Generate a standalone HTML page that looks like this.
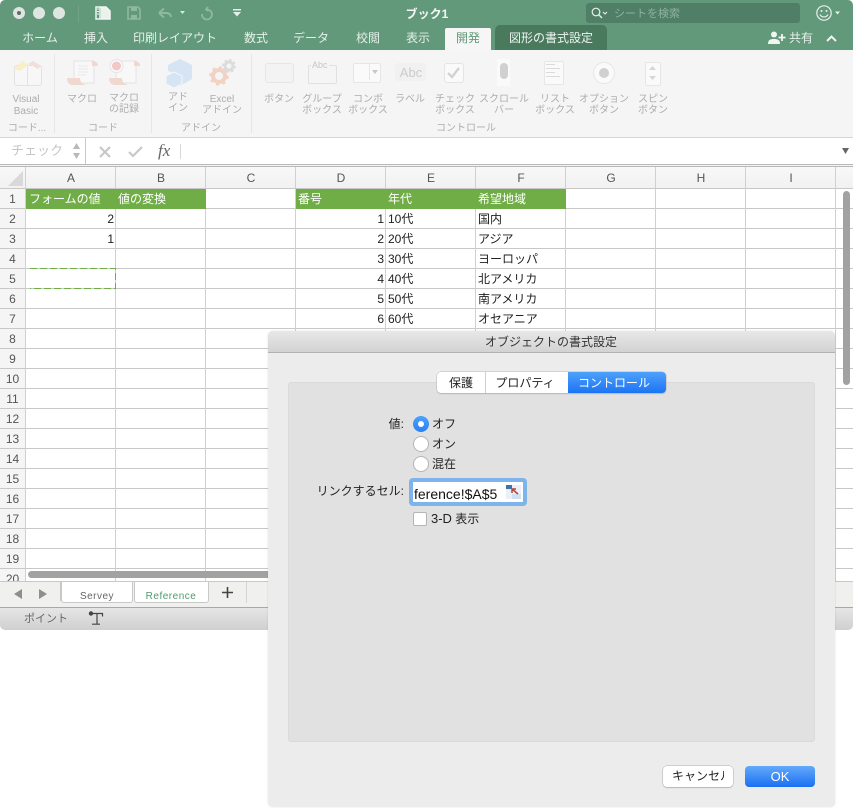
<!DOCTYPE html>
<html lang="ja"><head><meta charset="utf-8"><style>
html,body{margin:0;padding:0;background:#fff}
#p{position:relative;width:853px;height:808px;overflow:hidden;background:#fff;font-family:"Liberation Sans","Noto Sans CJK JP",sans-serif;font-size:12px;color:#222}
#p div{position:absolute}
#p svg{position:absolute;overflow:visible}
.t{white-space:nowrap;line-height:14px;height:14px}
.c{transform:translateX(-50%)}
.r{transform:translateX(-100%)}
.tab{color:#e6f0ea;font-size:12px;top:31px}
.rb{color:#adadad;font-size:10px;line-height:11px;height:auto;text-align:center}
.g{color:#adadad;font-size:10px;top:122px}
.sep{width:1px;top:54px;height:79px;background:#e6e6e6}
.rh{left:0;width:25px;text-align:center;color:#555;font-size:12px}
.ch{color:#555;font-size:12px;top:171px}
.w{color:#fff;font-size:12px;top:192px}
.k{color:#222;font-size:12px}
.n{color:#222;font-size:12px}
.rad{width:14px;height:14px;border-radius:50%;background:#fff;border:1px solid #b5b5b5;left:413px}
.d{color:#222;font-size:12px}
</style></head><body><div id="p">

<!-- title bar -->
<div style="left:0;top:0;width:853px;height:50px;background:#62997a;border-radius:5px 5px 0 0"></div>
<div style="left:13px;top:7px;width:12px;height:12px;border-radius:50%;background:#dfe5e1"></div>
<div style="left:17px;top:11px;width:4px;height:4px;border-radius:50%;background:#5d6e64"></div>
<div style="left:33px;top:7px;width:12px;height:12px;border-radius:50%;background:#dfe5e1"></div>
<div style="left:53px;top:7px;width:12px;height:12px;border-radius:50%;background:#dfe5e1"></div>
<div style="left:78px;top:5px;width:1px;height:17px;background:#6fa486"></div>
<svg style="left:95px;top:6px" width="16" height="14" viewBox="0 0 16 14"><path d="M1 1h10l4 4v8H1z" fill="none" stroke="#f2f6f3" stroke-width="1.5"/><path d="M5 1v12" stroke="#f2f6f3" stroke-width="1.5"/><path d="M2 3h2M2 5.500h2M2 8h2" stroke="#f2f6f3"/><path d="M6 1h5l4 4v8H6z" fill="#f2f6f3" opacity=".95"/></svg>
<svg style="left:127px;top:6px" width="14" height="14" viewBox="0 0 14 14"><path d="M1 1h10l2 2v10H1z" fill="none" stroke="#8fb8a0" stroke-width="1.6"/><path d="M4 1h6v4H4zM4 9h6v4H4z" fill="#8fb8a0"/></svg>
<svg style="left:157px;top:7px" width="28" height="12" viewBox="0 0 28 12"><path d="M2 6 7 1.500M2 6l5 4.500M2 6h7a4.500 4.500 0 0 1 5 4" fill="none" stroke="#8fb8a0" stroke-width="2"/><path d="M23 4h5l-2.500 3z" fill="#dbe8e0"/></svg>
<svg style="left:200px;top:6px" width="13" height="14" viewBox="0 0 13 14"><path d="M8 1 6 3.500 8.500 5M6.500 3.500A5 5 0 1 1 2 8" fill="none" stroke="#8fb8a0" stroke-width="1.800"/></svg>
<svg style="left:232px;top:9px" width="11" height="8" viewBox="0 0 11 8"><path d="M1 0h8v1.500H1z" fill="#e6f0ea"/><path d="M1 3h8L5 7.500z" fill="#e6f0ea"/></svg>
<div class="t c" style="left:427px;top:7px;color:#f4f8f5;font-weight:bold;font-size:12px">ブック1</div>
<div style="left:586px;top:3px;width:214px;height:20px;background:#4f7f66;border-radius:3px"></div>
<svg style="left:591px;top:7px" width="18" height="12" viewBox="0 0 18 12"><circle cx="5" cy="5" r="3.800" fill="none" stroke="#e8f0eb" stroke-width="1.200"/><path d="M8 8l3 3" stroke="#e8f0eb" stroke-width="1.300"/><path d="M12 5l2 2 2-2" fill="none" stroke="#e8f0eb" stroke-width="1.100"/></svg>
<div class="t" style="left:614px;top:7px;color:#8fb39f;font-size:11px">シートを検索</div>
<svg style="left:816px;top:5px" width="26" height="16" viewBox="0 0 26 16"><circle cx="8" cy="8" r="7.200" fill="none" stroke="#e8f0eb" stroke-width="1.200"/><circle cx="5.500" cy="6" r="1" fill="#e8f0eb"/><circle cx="10.500" cy="6" r="1" fill="#e8f0eb"/><path d="M4 9.500a4.500 4.500 0 0 0 8 0" fill="none" stroke="#e8f0eb" stroke-width="1.200"/><path d="M19 6.500h5l-2.500 3z" fill="#e8f0eb"/></svg>

<!-- tabs -->
<div class="t c tab" style="left:40px">ホーム</div>
<div class="t c tab" style="left:96px">挿入</div>
<div class="t c tab" style="left:175px">印刷レイアウト</div>
<div class="t c tab" style="left:256px">数式</div>
<div class="t c tab" style="left:311px">データ</div>
<div class="t c tab" style="left:368px">校閲</div>
<div class="t c tab" style="left:418px">表示</div>
<div style="left:445px;top:28px;width:46px;height:22px;background:#f6f6f6;border-radius:2px 2px 0 0"></div>
<div class="t c tab" style="left:468px;color:#62997a">開発</div>
<div style="left:495px;top:25px;width:112px;height:25px;background:#4a7a5e;border-radius:5px 5px 0 0"></div>
<div class="t c tab" style="left:551px;color:#eef4f0">図形の書式設定</div>
<svg style="left:768px;top:31px" width="18" height="13" viewBox="0 0 18 13"><circle cx="6" cy="3.500" r="3" fill="#f0f5f2"/><path d="M0 13c0-4 2-5 6-5s6 1 6 5z" fill="#f0f5f2"/><path d="M14 3v7M10.500 6.500h7" stroke="#f0f5f2" stroke-width="1.800"/></svg>
<div class="t c tab" style="left:801px">共有</div>
<svg style="left:826px;top:35px" width="11" height="7" viewBox="0 0 11 7"><path d="M1 6l4.500-4.500L10 6" fill="none" stroke="#f0f5f2" stroke-width="2"/></svg>

<!-- ribbon -->
<div style="left:0;top:50px;width:853px;height:87px;background:#f5f5f5"></div>
<div class="sep" style="left:54px"></div><div class="sep" style="left:151px"></div><div class="sep" style="left:251px"></div>

<svg style="left:12px;top:59px" width="32" height="28" viewBox="0 0 32 28"><rect x="2.500" y="6.500" width="27" height="20" rx="2" fill="#f7f7f7" stroke="#e2e2e2"/><path d="M15.500 7v19" stroke="#e2e2e2"/><path d="M1 10 11 2l5 4-8 6z" fill="#f8eec8"/><path d="M16 5l5-3 8 5-3 3-5-3z" fill="#f2dedb"/></svg>
<div class="t rb c" style="left:26px;top:94px;line-height:12px">Visual<br>Basic</div>
<div class="t g c" style="left:27px">コード...</div>

<svg style="left:66px;top:59px" width="33" height="28" viewBox="0 0 33 28"><path d="M8 2h20v22H12c-3 0-4-2-4-5z" fill="#f8f8f8" stroke="#e4e4e4"/><path d="M26 2c4 0 6 2 6 5h-6z" fill="#f0d8ce"/><path d="M1 19h13c0 4 2 6 6 7H7c-4 0-6-3-6-7z" fill="#f0d8ce"/><path d="M12 7h10M12 10h10M12 13h10M12 16h8" stroke="#e8e8e8"/></svg>
<div class="t rb c" style="left:82px;top:94px">マクロ</div>
<svg style="left:108px;top:59px" width="33" height="28" viewBox="0 0 33 28"><path d="M8 2h20v22H12c-3 0-4-2-4-5z" fill="#f8f8f8" stroke="#e4e4e4"/><path d="M26 2c4 0 6 2 6 5h-6z" fill="#f0d8ce"/><path d="M1 19h13c0 4 2 6 6 7H7c-4 0-6-3-6-7z" fill="#f0d8ce"/><circle cx="8.500" cy="7" r="6.500" fill="#fafafa" stroke="#e4e4e4"/><circle cx="8.500" cy="7" r="4.500" fill="#f3c6c8"/></svg>
<div class="t rb c" style="left:124px;top:93px">マクロ<br>の記録</div>
<div class="t g c" style="left:103px">コード</div>

<svg style="left:165px;top:58px" width="28" height="30" viewBox="0 0 28 30"><path d="M15 1l12 6v14l-12 7-6-3V15l-6-2 0-6z" fill="#d6e5f4"/><path d="M9 14l8 4v8l-8 4-8-4v-8z" fill="#d6e5f4" stroke="#f5f5f5"/></svg>
<div class="t rb c" style="left:178px;top:93px;line-height:10.500px">アド<br>イン</div>
<svg style="left:208px;top:59px" width="28" height="28" viewBox="0 0 28 28"><circle cx="11" cy="17" r="6" fill="none" stroke="#f1d2c3" stroke-width="4"/><circle cx="11" cy="17" r="8.500" fill="none" stroke="#f1d2c3" stroke-width="2.500" stroke-dasharray="3 3.600"/><circle cx="21" cy="7" r="4" fill="none" stroke="#dcdcdc" stroke-width="3"/><circle cx="21" cy="7" r="6" fill="none" stroke="#dcdcdc" stroke-width="2" stroke-dasharray="2.400 2.300"/></svg>
<div class="t rb c" style="left:222px;top:94px">Excel<br>アドイン</div>
<div class="t g c" style="left:201px">アドイン</div>

<div style="left:265px;top:63px;width:27px;height:18px;background:#f3f3f3;border:1px solid #e6e6e6;border-radius:3px"></div>
<div class="t rb c" style="left:279px;top:94px">ボタン</div>
<div style="left:308px;top:65px;width:27px;height:17px;border:1px solid #e0e0e0;border-radius:2px"></div>
<div class="t" style="left:311px;top:58px;padding:0 1px;background:#f5f5f5;color:#c6c6c6;font-size:9px">Abc</div>
<div class="t rb c" style="left:322px;top:94px">グループ<br>ボックス</div>
<div style="left:353px;top:63px;width:26px;height:18px;background:#fafafa;border:1px solid #e6e6e6;border-radius:2px"></div>
<div style="left:369px;top:64px;width:1px;height:16px;background:#e6e6e6"></div>
<svg style="left:372px;top:70px" width="6" height="5"><path d="M0 0h6L3 4z" fill="#c6c6c6"/></svg>
<div class="t rb c" style="left:368px;top:94px">コンボ<br>ボックス</div>
<div style="left:395px;top:63px;width:31px;height:18px;background:#f1f1f1;border-radius:3px"></div>
<div class="t c" style="left:411px;top:66px;color:#cbcbcb;font-size:13px">Abc</div>
<div class="t rb c" style="left:410px;top:94px">ラベル</div>
<div style="left:444px;top:63px;width:18px;height:18px;background:#fafafa;border:1px solid #e4e4e4;border-radius:3px"></div>
<svg style="left:447px;top:67px" width="14" height="12" viewBox="0 0 14 12"><path d="M1 6l4 4 7-9" fill="none" stroke="#d2d2d2" stroke-width="2.400"/></svg>
<div class="t rb c" style="left:455px;top:94px">チェック<br>ボックス</div>
<div style="left:497px;top:59px;width:13px;height:27px;background:#fafafa"></div>
<div style="left:500px;top:63px;width:8px;height:16px;background:#d0d0d0;border-radius:4px"></div>
<div class="t rb c" style="left:504px;top:94px">スクロール<br>バー</div>
<div style="left:544px;top:61px;width:18px;height:22px;background:#fafafa;border:1px solid #e6e6e6;border-radius:2px"></div>
<svg style="left:546px;top:64px" width="15" height="18"><path d="M0 .5h9M0 4.500h14M0 8.500h9M0 12.500h14" stroke="#dadada"/></svg>
<div class="t rb c" style="left:555px;top:94px">リスト<br>ボックス</div>
<div style="left:593px;top:62px;width:20px;height:20px;background:#fafafa;border:1px solid #e6e6e6;border-radius:50%"></div>
<div style="left:599px;top:68px;width:10px;height:10px;background:#d0d0d0;border-radius:50%"></div>
<div class="t rb c" style="left:604px;top:94px">オプション<br>ボタン</div>
<div style="left:645px;top:62px;width:14px;height:22px;background:#fafafa;border:1px solid #e6e6e6;border-radius:2px"></div>
<svg style="left:649px;top:66px" width="8" height="15"><path d="M0 4l3.500-4L7 4zM0 10h7l-3.500 4z" fill="#d6d6d6"/></svg>
<div class="t rb c" style="left:653px;top:94px">スピン<br>ボタン</div>
<div class="t g c" style="left:466px">コントロール</div>

<!-- formula bar -->
<div style="left:0;top:137px;width:853px;height:1px;background:#d6d6d6"></div>
<div style="left:0;top:138px;width:853px;height:26px;background:#fff"></div>
<div style="left:0;top:164px;width:853px;height:1px;background:#b8b8b8"></div>
<div style="left:0;top:165px;width:853px;height:1px;background:#f4f4f4"></div>
<div style="left:0;top:166px;width:853px;height:1px;background:#b8b8b8"></div>
<div style="left:85px;top:138px;width:1px;height:26px;background:#c8c8c8"></div>
<div class="t" style="left:11px;top:144px;color:#c6c6c6;font-size:13px">チェック</div>
<svg style="left:73px;top:143px" width="8" height="17"><path d="M0 6l3.500-6L7 6zM0 10h7l-3.500 6z" fill="#b8b8b8"/></svg>
<svg style="left:99px;top:146px" width="12" height="12"><path d="M1 1l10 10M11 1 1 11" stroke="#c8c8c8" stroke-width="2.200"/></svg>
<svg style="left:128px;top:146px" width="15" height="12"><path d="M1 6l4 4 9-9" fill="none" stroke="#c8c8c8" stroke-width="2.200"/></svg>
<div class="t" style="left:158px;top:143px;color:#666;font:italic 17px 'Liberation Serif',serif;line-height:16px">fx</div>
<div style="left:180px;top:144px;width:1px;height:15px;background:#d8d8d8"></div>
<svg style="left:842px;top:148px" width="8" height="6"><path d="M0 0h7L3.500 6z" fill="#666"/></svg>

<!-- grid -->
<div style="left:0;top:167px;width:853px;height:21px;background:linear-gradient(#f8f8f8,#f1f1f1)"></div>
<div style="left:0;top:188px;width:25px;height:393px;background:#f5f5f5"></div>
<div style="left:0;top:188px;width:853px;height:393px;background-image:repeating-linear-gradient(to bottom,#c8c8c8 0,#c8c8c8 1px,transparent 1px,transparent 20px)"></div>
<div style="left:25px;top:167px;width:828px;height:414px;background-image:repeating-linear-gradient(to right,#d0d0d0 0,#d0d0d0 1px,transparent 1px,transparent 90px);background-size:811px 100%;background-repeat:no-repeat"></div>
<svg style="left:8px;top:171px" width="16" height="16"><path d="M15 0v15H0z" fill="#d9d9d9"/></svg>

<div class="t ch c" style="left:71px">A</div><div class="t ch c" style="left:161px">B</div><div class="t ch c" style="left:251px">C</div><div class="t ch c" style="left:341px">D</div><div class="t ch c" style="left:431px">E</div><div class="t ch c" style="left:521px">F</div><div class="t ch c" style="left:611px">G</div><div class="t ch c" style="left:701px">H</div><div class="t ch c" style="left:791px">I</div>
<div class="t rh" style="top:192px">1</div><div class="t rh" style="top:212px">2</div><div class="t rh" style="top:232px">3</div><div class="t rh" style="top:252px">4</div><div class="t rh" style="top:272px">5</div><div class="t rh" style="top:292px">6</div><div class="t rh" style="top:312px">7</div><div class="t rh" style="top:332px">8</div><div class="t rh" style="top:352px">9</div><div class="t rh" style="top:372px">10</div><div class="t rh" style="top:392px">11</div><div class="t rh" style="top:412px">12</div><div class="t rh" style="top:432px">13</div><div class="t rh" style="top:452px">14</div><div class="t rh" style="top:472px">15</div><div class="t rh" style="top:492px">16</div><div class="t rh" style="top:512px">17</div><div class="t rh" style="top:532px">18</div><div class="t rh" style="top:552px">19</div><div class="t rh" style="top:572px;height:9px;overflow:hidden">20</div>

<div style="left:26px;top:189px;width:180px;height:20px;background:#70ad47"></div>
<div style="left:296px;top:189px;width:270px;height:20px;background:#70ad47"></div>
<div class="t w" style="left:29px">フォームの値</div><div class="t w" style="left:118px">値の変換</div>
<div class="t w" style="left:298px">番号</div><div class="t w" style="left:388px">年代</div><div class="t w" style="left:478px">希望地域</div>
<div class="t n r" style="left:114px;top:212px">2</div><div class="t n r" style="left:114px;top:232px">1</div>
<div class="t n r" style="left:384px;top:212px">1</div><div class="t n r" style="left:384px;top:232px">2</div><div class="t n r" style="left:384px;top:252px">3</div><div class="t n r" style="left:384px;top:272px">4</div><div class="t n r" style="left:384px;top:292px">5</div><div class="t n r" style="left:384px;top:312px">6</div>
<div class="t k" style="left:388px;top:212px">10代</div><div class="t k" style="left:388px;top:232px">20代</div><div class="t k" style="left:388px;top:252px">30代</div><div class="t k" style="left:388px;top:272px">40代</div><div class="t k" style="left:388px;top:292px">50代</div><div class="t k" style="left:388px;top:312px">60代</div>
<div class="t k" style="left:478px;top:212px">国内</div><div class="t k" style="left:478px;top:232px">アジア</div><div class="t k" style="left:478px;top:252px">ヨーロッパ</div><div class="t k" style="left:478px;top:272px">北アメリカ</div><div class="t k" style="left:478px;top:292px">南アメリカ</div><div class="t k" style="left:478px;top:312px">オセアニア</div>

<svg style="left:26px;top:268px" width="91" height="22"><path d="M4 .5H89.500V20.500H4" fill="none" stroke="#70ad47" stroke-dasharray="7 3"/></svg>

<!-- scrollbars -->
<div style="left:843px;top:191px;width:7px;height:194px;background:#a2a2a2;border-radius:4px"></div>
<div style="left:28px;top:571px;width:245px;height:7px;background:#a2a2a2;border-radius:4px"></div>

<!-- sheet tabs / status -->
<div style="left:0;top:581px;width:853px;height:1px;background:#c8c8c8"></div>
<div style="left:0;top:582px;width:853px;height:25px;background:#f0f0ee"></div>
<svg style="left:14px;top:589px" width="33" height="11"><path d="M8 0v10L0 5zM25 0v10l8-5z" fill="#8e8e8e"/></svg>
<div style="left:61px;top:582px;width:72px;height:21px;background:#fff;border:1px solid #c8c8c8;border-top:0;border-radius:0 0 3px 3px;box-sizing:border-box"></div>
<div style="left:134px;top:582px;width:75px;height:21px;background:#fff;border:1px solid #c8c8c8;border-top:0;border-radius:0 0 3px 3px;box-sizing:border-box"></div>
<div style="left:60px;top:581px;width:1px;height:20px;background:#c8c8c8"></div>
<div class="t c" style="left:97px;top:590px;color:#666;font-size:10px;letter-spacing:.5px">Servey</div>
<div class="t c" style="left:171px;top:590px;color:#4e9a6d;font-size:10px;letter-spacing:.5px">Reference</div>
<svg style="left:222px;top:587px" width="11" height="11"><path d="M5.500 0v11M0 5.500h11" stroke="#444" stroke-width="1.600"/></svg>
<div style="left:246px;top:582px;width:1px;height:21px;background:#d4d4d4"></div>
<div style="left:0;top:607px;width:853px;height:1px;background:#a8a8a8"></div>
<div style="left:0;top:608px;width:853px;height:22px;background:linear-gradient(#e6e6e6,#d0d0d0);border-radius:0 0 5px 5px"></div>
<div class="t" style="left:24px;top:612px;color:#666;font-size:11px">ポイント</div>
<svg style="left:88px;top:611px" width="16" height="15" viewBox="0 0 16 15"><circle cx="3" cy="2.500" r="2.200" fill="#444"/><path d="M3 2.500h11.500v3M9 2.500v10.500M4 13.200h8" fill="none" stroke="#444" stroke-width="1.200"/></svg>

<!-- dialog -->
<div style="left:268px;top:331px;width:567px;height:476px;background:#ececec;border-radius:5px 5px 5px 5px;box-shadow:0 0 2px rgba(0,0,0,.12)"></div>
<div style="left:268px;top:331px;width:567px;height:21px;background:linear-gradient(#e9e7e9,#d3d3d3);border-bottom:1px solid #b2b2b2;border-radius:5px 5px 0 0"></div>
<div class="t c" style="left:551px;top:335px;color:#333;font-size:12px">オブジェクトの書式設定</div>
<div style="left:288px;top:382px;width:525px;height:358px;background:#e1e1e1;border:1px solid #dadada;border-radius:3px"></div>

<div style="left:437px;top:372px;width:229px;height:21px;background:#fff;border-radius:4px;box-shadow:0 0 0 .5px #b8b8b8,0 1px 1px rgba(0,0,0,.2)"></div>
<div style="left:485px;top:372px;width:1px;height:21px;background:#d0d0d0"></div>
<div style="left:568px;top:372px;width:98px;height:21px;background:linear-gradient(#4ea1fb,#1c74f3);border-radius:0 4px 4px 0"></div>
<div class="t c" style="left:461px;top:376px;color:#222;font-size:12px">保護</div>
<div class="t c" style="left:525px;top:376px;color:#222;font-size:12px">プロパティ</div>
<div class="t c" style="left:614px;top:376px;color:#fff;font-size:12px">コントロール</div>

<div class="t d r" style="left:404px;top:417px">値:</div>
<div class="rad" style="top:416px;width:16px;height:16px;left:413px;border:0;background:linear-gradient(#4ea1fb,#2a80f5)"></div>
<div style="left:418px;top:421px;width:6px;height:6px;background:#fff;border-radius:50%"></div>
<div class="rad" style="top:436px"></div>
<div class="rad" style="top:456px"></div>
<div class="t d" style="left:432px;top:417px">オフ</div>
<div class="t d" style="left:432px;top:437px">オン</div>
<div class="t d" style="left:432px;top:457px">混在</div>

<div class="t d r" style="left:404px;top:484px">リンクするセル:</div>
<div style="left:409px;top:478px;width:118px;height:28px;background:#7db4ec;border-radius:4px"></div>
<div style="left:413px;top:482px;width:110px;height:20px;background:#fff"></div>
<div class="t" style="left:414px;top:487px;color:#111;font-size:14px">ference!$A$5</div>
<svg style="left:506px;top:485px" width="15" height="14" viewBox="0 0 15 14"><rect width="15" height="14" fill="#eaf0f5"/><rect width="6" height="4" fill="#3f72a8"/><rect y="9" x="6" width="9" height="5" fill="#cfe0ee"/><path d="M6 4l6 5M6 4h4M6 4v4" stroke="#b5463c" stroke-width="1.500" fill="none"/></svg>
<div style="left:413px;top:512px;width:12px;height:12px;background:#fff;border:1px solid #b5b5b5;border-radius:2px"></div>
<div class="t d" style="left:431px;top:512px"><span style="font-size:13px">3-D</span> 表示</div>

<div style="left:663px;top:766px;width:70px;height:21px;background:#fff;border-radius:4px;box-shadow:0 0 0 .5px #b0b0b0,0 1px 1px rgba(0,0,0,.2)"></div>
<div class="t" style="left:672px;top:769px;width:52px;overflow:hidden;color:#222;font-size:12px">キャンセル</div>
<div style="left:745px;top:766px;width:70px;height:21px;background:linear-gradient(#63a9fb,#1a70f2);border-radius:4px"></div>
<div class="t c" style="left:780px;top:770px;color:#fff;font-size:13px">OK</div>

</div></body></html>
